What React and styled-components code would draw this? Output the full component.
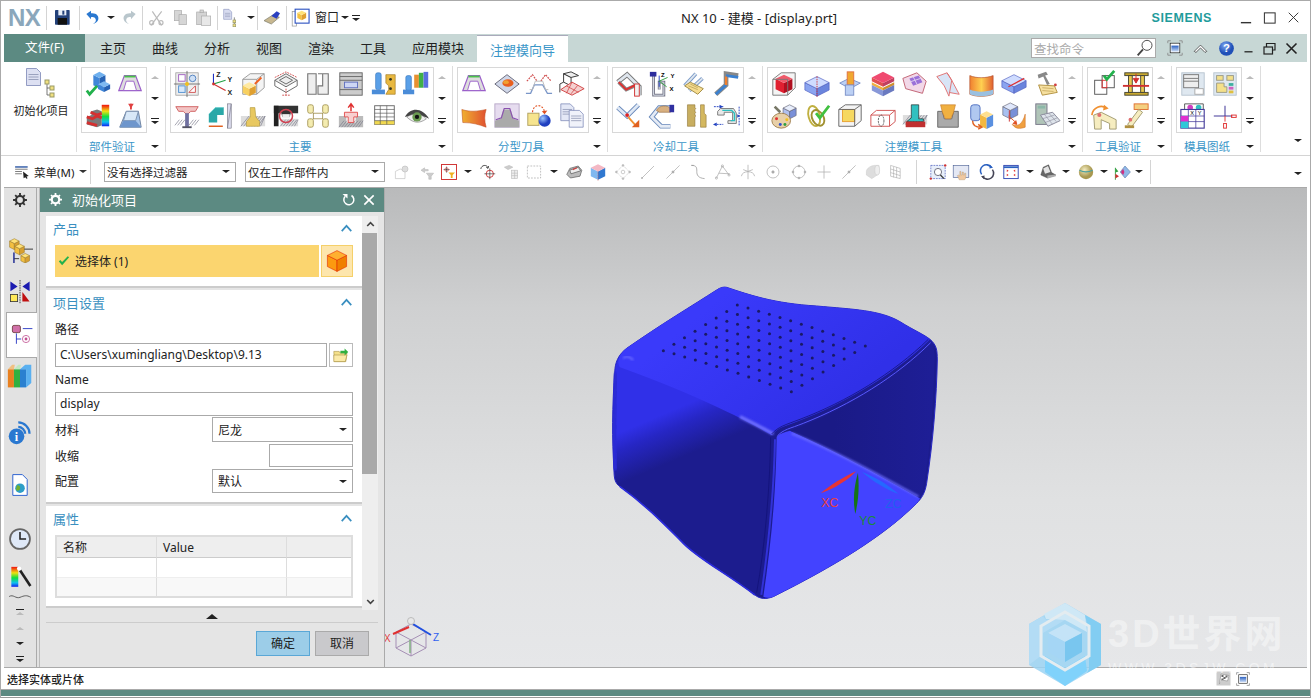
import React from 'react';
import styled, { createGlobalStyle } from 'styled-components';

const Global = createGlobalStyle`
  html, body { margin: 0; padding: 0; background: #fff; }
  * { box-sizing: border-box; }
  body { font-family: "Noto Sans", "Noto Sans CJK SC", sans-serif; color: #222; }
`;

const Frame = styled.div`
  position: relative; width: 1311px; height: 698px; overflow: hidden; background: #fff;
  border-top: 1px solid #aaa; border-left: 1px solid #aaa; border-right: 1px solid #aaa; border-bottom: 1px solid #999;
  display: flex; flex-direction: column;
`;
const TitleBar = styled.div`height: 33px; display: flex; align-items: center; flex-shrink: 0; padding-left: 7px; position: relative;`;
const Logo = styled.div`width: 33px; font: bold 24px/33px "Liberation Sans", sans-serif; color: #8ba7bb; letter-spacing: -0.5px;`;
const TitleItem = styled.div`width: ${p => p.$w}px; height: 24px; display: flex; align-items: center; justify-content: center; flex-shrink: 0;`;
const VSep = styled.div`width: 1px; height: ${p => p.$h || 24}px; background: #d4d4d4; flex-shrink: 0; margin: 0 ${p => p.$m || 0}px;`;
const WinLabel = styled.span`font-size: 12px; width: 24px; line-height: 24px; white-space: nowrap;`;
const AppTitle = styled.div`position: absolute; left: 680px; top: 0; font-size: 13px; line-height: 35px; white-space: nowrap; color: #222;`;
const Brand = styled.div`margin-left: auto; font: bold 12.5px/36px "Liberation Sans", sans-serif; letter-spacing: 0.6px; color: #1f9c9c; margin-right: 27px;`;
const WinBtns = styled.div`display: flex; align-items: center; gap: 10px; margin-right: 10px;`;

const TabBar = styled.div`height: 28px; margin: 0 3px; background: #c7d7d5; display: flex; align-items: stretch; flex-shrink: 0;`;
const FileTab = styled.div`width: 81px; background: #5c8a82; color: #fff; font-size: 12.5px; line-height: 28px; text-align: center; margin-right: 2px;`;
const Tab = styled.div`
  padding: 0 13px; font-size: 13px; line-height: 28px; white-space: nowrap;
  color: ${p => p.$active ? '#3a96c8' : '#222'}; background: ${p => p.$active ? '#fff' : 'transparent'};
  border-top: ${p => p.$active ? '1px solid #aab' : '0'}; margin-top: ${p => p.$active ? '1px' : '0'};
`;
const TabRight = styled.div`margin-left: auto; display: flex; align-items: center; margin-right: 5px;`;
const Search = styled.div`
  width: 125px; height: 20px; background: #fff; border: 1px solid #aaa; display: flex; align-items: center; justify-content: space-between;
  font-size: 12.5px; color: #aaa; padding: 0 0 0 2px; margin-right: 8px;
`;
const TabBtn = styled.div`width: ${p => p.$w || 24}px; height: 26px; display: flex; align-items: center; justify-content: center;`;

const Ribbon = styled.div`height: 93px; padding: 4px 0 0 3px; display: flex; flex-shrink: 0; position: relative;`;
const InitGroup = styled.div`width: 73px; height: 86px; border-right: 1px solid #ddd; display: flex; flex-direction: column; align-items: center; font-size: 11px; padding-left: 2px;`;
const InitIcon = styled.div`height: 32px; display: flex; align-items: flex-end;`;
const InitLabel = styled.div`margin-top: 6px; line-height: 14px; white-space: nowrap;`;
const Group = styled.div`height: 86px; padding: 1px 0 0 4px; border-right: 1px solid #ddd; flex-shrink: 0;`;
const GroupBody = styled.div`display: flex;`;
const IconGrid = styled.div`
  width: ${p => p.$cols * 33}px; height: 66px; border: 1px solid #d8d8d8; display: grid;
  grid-template-columns: repeat(${p => p.$cols}, 1fr); grid-template-rows: 1fr 1fr; align-items: center; justify-items: center;
`;
const ScrollCol = styled.div`width: 18px; height: 66px; display: flex; flex-direction: column; align-items: center; justify-content: space-around; padding: 0 3px 0 0;`;
const GroupFoot = styled.div`display: flex; margin-top: 7px; height: 13px; align-items: center;`;
const GroupLabel = styled.div`width: ${p => p.$cols * 33}px; text-align: center; font-size: 11.5px; line-height: 13px; color: #3a96c8; padding-right: 4px;`;
const FootArrow = styled.div`width: 18px; display: flex; justify-content: center; padding-right: 3px;`;
const RibbonEnd = styled.div`position: absolute; right: 8px; bottom: 8px;`;

const Tri = styled.span`
  display: inline-block; width: 0; height: 0; border-left: ${p => p.$s || 4}px solid transparent; border-right: ${p => p.$s || 4}px solid transparent;
  ${p => p.$up ? `border-bottom: ${(p.$s || 4) - 1}px solid ${p.$c || '#222'};` : `border-top: ${(p.$s || 4) - 1}px solid ${p.$c || '#222'};`}
`;
const Over = styled.span`
  display: inline-flex; flex-direction: column; align-items: center; gap: 2px;
  &::before { content: ''; width: 8px; height: 1px; background: #222; }
`;

const ToolBar = styled.div`height: 32px; border-top: 1px solid #d4d4d4; display: flex; align-items: center; flex-shrink: 0; padding-left: 13px; position: relative;`;
const MenuBtn = styled.div`display: flex; align-items: center; gap: 3px; font-size: 11.5px; width: 76px; flex-shrink: 0;`;
const Sel = styled.div`
  width: ${p => p.$w}px; height: ${p => p.$h || 20}px; border: 1px solid #aaa; background: #fff; display: flex; align-items: center; justify-content: space-between;
  padding: 0 5px 0 2px; font-size: ${p => p.$fs || 11.5}px; margin-left: ${p => p.$ml || 0}px; flex-shrink: 0; white-space: nowrap;
`;
const ToolItem = styled.div`width: ${p => p.$w}px; height: 24px; display: flex; align-items: center; justify-content: center; flex-shrink: 0;`;
const ToolEnd = styled.div`position: absolute; right: 8px; bottom: 7px;`;

const Main = styled.div`
  height: 481px; border-top: 1px solid #aaa; border-bottom: 1px solid #aaa; display: flex; flex-shrink: 0; margin: 0 3px; 
`;
const Rail = styled.div`width: 33px; height: 100%; background: #e2e2e2; border-right: 1px solid #aaa; display: flex; flex-direction: column; align-items: center; flex-shrink: 0;`;
const RailItem = styled.div`
  width: ${p => p.$active ? '31px' : '100%'}; height: ${p => p.$h}px; margin-top: ${p => p.$mt || 0}px; display: flex; align-items: center; justify-content: center; flex-shrink: 0;
  ${p => p.$active ? 'align-self: flex-end; margin-right: -1px; background: #fff; border: 1px solid #aaa; border-right: 0;' : ''}
`;
const RailGap = styled.div`width: 3px; background: #e2e2e2; border-right: 1px solid #bbb; flex-shrink: 0;`;
const Dialog = styled.div`width: 345px; background: #e5e5e5; border-right: 1px solid #aaa; display: flex; flex-direction: column; flex-shrink: 0;`;
const DialogHead = styled.div`height: 24px; background: #5c8a82; color: #fff; display: flex; align-items: center; font-size: 13px; line-height: 22px; padding: 0 8px 1px; gap: 9px;`;
const HeadRight = styled.div`margin-left: auto; display: flex; gap: 6px; align-items: center;`;
const DialogScroll = styled.div`display: flex; padding: 4px 6px 0; height: 398px;`;
const Panel = styled.div`width: 317px; display: flex; flex-direction: column; gap: 2px;`;
const Section = styled.div`background: #fff; padding: 0 9px; border-bottom: 2px solid #ccc; height: ${p => p.$h}px;`;
const SecHead = styled.div`height: 25px; margin: 0 0 1px -2px; display: flex; align-items: center; justify-content: space-between; color: #3a8fc0; font-size: 13px;`;
const Picked = styled.div`display: flex; gap: 2px; margin-top: 4px;`;
const PickMain = styled.div`width: 264px; height: 32px; background: #fbd56f; display: flex; align-items: center; gap: 4px; padding-left: 2px; font-size: 12px;`;
const PickBtn = styled.div`width: 32px; height: 32px; background: #fde6ad; border: 1px solid #f5d06a; display: flex; align-items: center; justify-content: center;`;
const LabelRow = styled.div`height: ${p => p.$h}px; display: flex; align-items: center; font-size: 12px; line-height: 14px;`;
const Field = styled.div`
  width: ${p => p.$w}px; height: ${p => p.$h || 24}px; border: 1px solid #aaa; background: #fff; font-size: 12px; line-height: 22px; padding-left: 4px; white-space: nowrap; flex-shrink: 0;
`;
const FieldRow = styled.div`display: flex; justify-content: space-between; align-items: flex-start;`;
const IconBtn = styled.div`width: 24px; height: 24px; border: 1px solid #bbb; display: flex; align-items: center; justify-content: center;`;
const Row = styled.div`height: ${p => p.$h}px; margin-top: ${p => p.$mt || 0}px; display: flex; align-items: center; justify-content: space-between; font-size: 12px; width: 298px;`;
const Table = styled.div`width: 298px; height: 63px; border: 2px solid #ddd; margin-top: 4px; font-size: 12px; display: grid; grid-template-columns: 100px 130px 1fr; grid-template-rows: 21px 20px 1fr;`;
const Cell = styled.div`
  padding-left: 6px; line-height: 21px; border-right: ${p => p.$end ? '0' : '1px solid #ddd'};
  background: ${p => p.$head ? '#eee' : p.$alt ? '#f8f8f8' : '#fff'};
  border-bottom: ${p => p.$last ? '0' : p.$head ? '1px solid #ccc' : '1px solid #eee'};
`;
const SBar = styled.div`width: 16px; margin-left: 0; background: #eee; height: 394px; display: flex; flex-direction: column; align-items: center;`;
const SBtn = styled.div`height: 17px; display: flex; align-items: center; justify-content: center; flex-shrink: 0; margin-top: ${p => p.$end ? 'auto' : '0'};`;
const SThumb = styled.div`width: 15px; height: 241px; background: #a9a9a9; align-self: flex-start; flex-shrink: 0;`;
const Collapse = styled.div`height: 13px; margin: 0 6px; border-bottom: 1px solid #ccc; display: flex; align-items: center; justify-content: center; padding-right: 1px; flex-shrink: 0;`;
const Buttons = styled.div`display: flex; justify-content: flex-end; gap: 5px; padding: 8px 15px 0 0;`;
const Btn = styled.div`
  width: 54px; height: 25px; text-align: center; font-size: 12px; line-height: 23px; border: 1px solid ${p => p.$primary ? '#5aa7d6' : '#aaa'}; background: ${p => p.$primary ? '#9ccde8' : '#c9c9cc'};
`;
const Viewport = styled.div`flex: 1; background: linear-gradient(#b9babb 0%, #cfd0d1 25%, #e0e1e2 65%, #e6e7e9 100%);`;
const Stage = styled.svg`display: block; width: 922px; height: 479px;`;
const StatusBar = styled.div`
  height: 21px; margin: 0 0 0 0; padding: 0 59px 0 6px; display: flex; align-items: center; font-size: 11px; font-weight: 500; color: #222; background: #fff; flex-shrink: 0; gap: 4px; position: relative;
`;
const StatusText = styled.div`margin-right: auto;`;
const Strip = styled.div`height: 6px; border-top: 1px solid #aaa; background: #5c8a82; box-sizing: content-box; flex-shrink: 0;`;
const Watermark = styled.div`position: absolute; left: 1027px; top: 601px; display: flex; gap: 6px; pointer-events: none;`;
const MarkText = styled.div`display: flex; flex-direction: column; padding-top: 9px;`;
const MarkTitle = styled.div`font: bold 38px/46px "Liberation Sans", "Noto Sans CJK SC", sans-serif; color: rgba(255,255,255,.42); white-space: nowrap; letter-spacing: 3px;`;
const MarkSub = styled.div`font: 14px/16px "Liberation Sans", sans-serif; color: rgba(255,255,255,.5); letter-spacing: 3.4px; margin-top: 3px; white-space: nowrap;`;
const Defs = styled.svg`position: absolute; width: 0; height: 0;`;

const Cube = ({ x, y, w = 12, h, t = '#ffd24d', l = '#f0a830', r = '#d88a20', s = 'none' }) => {
  const d = w / 4; const H = h ?? w / 2; const m = x + w / 2;
  return <g stroke={s} strokeWidth=".7">
    <polygon points={`${x},${y + d} ${m},${y + 2 * d} ${m},${y + 2 * d + H} ${x},${y + d + H}`} fill={l} />
    <polygon points={`${x + w},${y + d} ${m},${y + 2 * d} ${m},${y + 2 * d + H} ${x + w},${y + d + H}`} fill={r} />
    <polygon points={`${x},${y + d} ${m},${y} ${x + w},${y + d} ${m},${y + 2 * d}`} fill={t} />
  </g>;
};
const Chk = ({ x = 0, y = 0, w = 2.6 }) => <path transform={`translate(${x} ${y})`} d="M0 5l3 4 8-9" fill="none" stroke="#22b14c" strokeWidth={w} />;
const Hatch = ({ x, y, w, h }) => <g stroke="#778" strokeWidth=".7">{Array.from({ length: Math.floor(w / 3) }, (_, i) => <line key={i} x1={x + i * 3} y1={y + h} x2={x + i * 3 + h * .8 > x + w ? x + w : x + i * 3 + h * .8} y2={y} />)}</g>;
const Doc = ({ x, y, w = 12, h = 15, f = '#e4e8f6', s = '#7b86b5' }) => <g><path d={`M${x} ${y}h${w - 4}l4 4v${h - 4}h-${w}z`} fill={f} stroke={s} strokeWidth=".8" /><path d={`M${x + 2} ${y + 6}h${w - 4}M${x + 2} ${y + 8.5}h${w - 4}M${x + 2} ${y + 11}h${w - 4}`} stroke="#8a92b0" strokeWidth=".8" /></g>;
const Pipe = ({ d, c = '#889', i = '#dfe6ee', w = 4 }) => <g fill="none"><path d={d} stroke={c} strokeWidth={w} /><path d={d} stroke={i} strokeWidth={w - 2} /></g>;

const G = {
  partCheck: <g><Cube x={10} y={2} w={13} h={11} t="#6fb0ee" l="#3f86d8" r="#2763b5" /><Cube x={15} y={12} w={13} h={5} t="#7fbaf2" l="#3f86d8" r="#2763b5" /><Chk x={3} y={17} w={3} /></g>,
  trapPurple: <g><path d="M9 6h12l6 16H3z" fill="#ddd" stroke="#9a5fc9" strokeWidth="1.3" /><path d="M11 12h8l3 10H8z" fill="#fff" stroke="#9a5fc9" /><path d="M9 7h12" stroke="#4bc04b" strokeWidth="2" /></g>,
  stairRain: <g><rect x="19" y="3" width="8" height="23" fill="url(#rainbow)" /><path d="M3 16l5-2v-4l6-2 5 2v15l-5 2-11-3z" fill="#7a7a7a" /><path d="M3 16l6 2 5-3 5 2M7 11l7 3 5-2M3 22l11 3" stroke="#d43030" strokeWidth="3" fill="none" /></g>,
  machine: <g><path d="M11 10h13l3 17H4z" fill="#a8c6ea" stroke="#6a7f9d" /><path d="M11 10h13l-3 10H8z" fill="#d8e8f8" stroke="#7a8fad" /><path d="M4 27l4-7h13l6 7z" fill="#6e96cc" /><path d="M16 2v6" stroke="#e04040" strokeWidth="2" /><path d="M13 2h6l-3 5z" fill="#e04040" /></g>,
  layout: <g><rect x="3" y="3" width="24" height="24" fill="#eee" stroke="#999" strokeWidth=".8" /><rect x="6" y="5" width="7" height="7" fill="#fff" stroke="#a060c0" /><circle cx="21" cy="9" r="3.5" fill="#cfe0f5" stroke="#5080c0" /><rect x="6" y="17" width="7" height="7" fill="#d8e8fa" stroke="#5090d0" /><path d="M17 24l7-7v7z" fill="#fff" stroke="#d05050" /><path d="M15 1v28M1 15h28" stroke="#555" strokeWidth=".8" /><circle cx="15" cy="15" r="2.2" fill="#f0c020" /></g>,
  wcs: <g fontSize="7.5" fontWeight="700" fontFamily="Liberation Sans" fill="#222"><path d="M8 15V4" stroke="#2030c0" strokeWidth="1.2" /><path d="M8 15l13-4" stroke="#20a040" strokeWidth="1.2" /><path d="M8 15l13 7" stroke="#d03030" strokeWidth="1.2" /><circle cx="8" cy="15" r="1.5" fill="#d03030" /><text x="11" y="8">Z</text><text x="23" y="13">Y</text><text x="23" y="27">X</text></g>,
  wireYel: <g><path d="M4 10l8-6h15v15l-8 7H4z" fill="#f4f4f4" stroke="#999" /><path d="M4 10h15v16M19 10l8-6" fill="none" stroke="#999" /><Cube x={4} y={13} w={14} h={8} t="#ffe9a0" l="#f7d060" r="#e0a030" /><path d="M17 15l7-7" stroke="#f06020" strokeWidth="2" /></g>,
  moldDot: <g fill="none"><path d="M3 11l12-7 12 7-12 7z" fill="#eee" stroke="#666" /><path d="M8 11l7-4 7 4-7 4z" stroke="#666" /><path d="M3 11v6l12 7 12-7v-6" stroke="#666" /><path d="M3 8l12-6 12 6M15 20v7M11 27h8" stroke="#d05050" strokeDasharray="2 1" /></g>,
  notch: <g fill="#eee" stroke="#777" strokeWidth="1.2"><path d="M4 4h9v22H4z" /><path d="M15 4h11v22h-11v-9h5V4" /></g>,
  moldFrame: <g><rect x="3" y="3" width="24" height="24" fill="#ccc" stroke="#666" /><path d="M3 7h24M3 11h24M3 21h24" stroke="#666" /><rect x="8" y="13" width="14" height="6" fill="#cdd6f4" stroke="#6070c0" /></g>,
  boltPlate: <g><rect x="6" y="3" width="6" height="18" rx="2" fill="#5aa0e8" stroke="#3070b8" strokeWidth=".6" /><path d="M2 21h14v5H2z" fill="#4a8cd8" /><path d="M17 5h10v21H17l3-5v-4l-3-3v-4z" fill="#e8b840" stroke="#a07820" strokeWidth=".7" /><circle cx="22" cy="10" r="1.5" fill="#332" /><circle cx="22" cy="20" r="1.5" fill="#332" /></g>,
  boltBooks: <g><rect x="3" y="6" width="6" height="16" rx="2" fill="#5aa0e8" stroke="#3070b8" strokeWidth=".6" /><path d="M0 21h12v5H0z" fill="#4a8cd8" /><rect x="12" y="5" width="5" height="14" fill="#e89030" /><rect x="17" y="3" width="5" height="16" fill="#40b048" /><rect x="22" y="2" width="5" height="17" fill="#5a70e0" /></g>,
  ejector: <g><Hatch x={2} y={19} w={11} h={6} /><Hatch x={17} y={19} w={11} h={6} /><path d="M3 5h24l-3 5h-5l-3 3H14l-3-3H6z" fill="#f2c4c4" stroke="#d06060" /><rect x="13" y="12" width="4" height="15" fill="#7070a0" /><path d="M10 27h10" stroke="#556" strokeWidth="2" /></g>,
  slider: <g><path d="M3 22V13l7-7h9v8h-7v8z" fill="#2aa8a8" /><path d="M3 13l7-7h9" stroke="#70d0d0" fill="none" /><path d="M3 26h15" stroke="#e06020" strokeWidth="1.6" /><rect x="23" y="2" width="4" height="26" fill="#dde" stroke="#667" strokeWidth=".6" /><Hatch x={23} y={2} w={4} h={26} /></g>,
  hatchYel: <g><rect x="2" y="15" width="26" height="11" fill="#ddd" /><Hatch x={2} y={15} w={26} h={11} /><path d="M12 6h5l1 10 4 5v5H8v-5l4-5z" fill="#e8c860" stroke="#a89030" strokeWidth=".6" /></g>,
  moldRed: <g><path d="M2 4h26v8H20l-1 4h-8l-1-4H2z" fill="#333" /><path d="M2 4h5v22H2z" fill="#222" /><path d="M9 18h19v8H9z" fill="#ddd" /><Hatch x={9} y={19} w={19} h={7} /><circle cx="15" cy="15" r="7" fill="none" stroke="#d04050" strokeWidth="1.6" /><rect x="11" y="13" width="8" height="4" fill="#eee" /></g>,
  yelH: <g fill="#f4ecb0" stroke="#a09050" strokeWidth=".9"><rect x="4" y="3" width="6" height="9" rx="2" /><rect x="20" y="3" width="6" height="9" rx="2" /><rect x="4" y="18" width="6" height="9" rx="2" /><rect x="20" y="18" width="6" height="9" rx="2" /><rect x="10" y="12" width="10" height="6" fill="#fff" /></g>,
  redUp: <g><path d="M2 15h8v7h10v-7h8v12H2z" fill="#bbb" /><Hatch x={2} y={20} w={26} h={7} /><path d="M8 11h14v5h-4v6h-6v-6H8z" fill="#f8d0d0" stroke="#e05050" /><path d="M15 10V3M12 6l3-4 3 4" stroke="#e03030" strokeWidth="1.6" fill="none" /></g>,
  table: <g><rect x="5" y="4" width="21" height="20" fill="#fff" stroke="#666" /><rect x="5" y="20" width="21" height="4" fill="#f0d850" /><path d="M5 8h21M5 12h21M5 16h21M5 20h21M11 4v20M18 4v20" stroke="#555" strokeWidth=".7" /></g>,
  eye: <g><path d="M2 16C8 6 20 5 28 18 21 14 12 13 2 16z" fill="#444" /><path d="M4 16c8-5 15-4 21 2-8 6-15 4-21-2z" fill="#eee" stroke="#666" strokeWidth=".6" /><circle cx="15" cy="16" r="5" fill="#6a9a50" /><circle cx="15" cy="16" r="2.3" fill="#111" /></g>,
  diamond: <g><path d="M2 15L15 5l13 10-13 10z" fill="#cfd6e8" stroke="#667" /><ellipse cx="16" cy="14" rx="6" ry="4" fill="#e86020" /><ellipse cx="14" cy="13" rx="3" ry="2" fill="#f0a030" /></g>,
  wave: <g fill="none"><path d="M2 12l6-7 5 7M17 12l5-7 6 7" stroke="#d05050" strokeDasharray="2 1" strokeWidth="1.3" /><path d="M1 25h5l4-9h9l5 9h5" stroke="#7a96c8" strokeWidth="1.4" /><path d="M5 21h3l3-9h8l3 9h3" stroke="#bbb" /></g>,
  redGrid: <g><path d="M6 4l8 4v9l-8-4z" fill="#fff" stroke="#333" /><path d="M6 4l8-2 8 4-8 2z" fill="#eee" stroke="#333" /><path d="M2 15v9M6 13l-4 2" stroke="#333" /><path d="M3 21l12-8 13 7-13 7z" fill="#f4d0d0" stroke="#d04040" /><path d="M9 17l13 7M15 13l-6 12M21 16.500l-7 9" stroke="#d04040" strokeWidth=".8" /></g>,
  orange: <path d="M2 8c9 3 17 2 26 0-2 6-2 12 0 19-8-3-15-5-25-5z" fill="url(#orangeG)" stroke="#c05020" strokeWidth=".6" />,
  grayPurple: <g><rect x="2" y="2" width="26" height="25" fill="#e6dcef" stroke="#b8a8c8" /><path d="M2 27v-7l6-2 3-10h8l3 10 6 2v7z" fill="#aaa" /><path d="M3 19l6-2 3-10h6l3 10 6 2" stroke="#8a50b0" fill="none" strokeWidth="1.2" /></g>,
  squareBall: <g><rect x="3" y="12" width="12" height="13" fill="#f6e48e" stroke="#b0a060" /><circle cx="21" cy="20" r="6.500" fill="url(#ball)" /><path d="M8 11C9 2 19 1 21 11" fill="none" stroke="#e05020" strokeDasharray="2 1.500" strokeWidth="1.2" /><path d="M18 10l3 3 3-4z" fill="#e05020" /></g>,
  docs: <g><Doc x={3} y={2} w={14} h={18} /><Doc x={12} y={9} w={15} h={18} f="#f0f2fa" /></g>,
  pipeRed: <g><Pipe d="M3 13L13 5l13 13v9" w={5} c="#777" /><path d="M4 13l8 8 9-4" fill="none" stroke="#888" strokeWidth="4" /><path d="M4 13l8 8 10-5" fill="none" stroke="#e03030" strokeWidth="2" /><rect x="21" y="15" width="5" height="13" fill="#f2f2f2" stroke="#d03030" /></g>,
  pipeAxes: <g><Pipe d="M6 6v21h11V13h-5v8" w={3} c="#778" /><path d="M12 6v12" stroke="#2040c0" /><path d="M12 12l9-4M12 12l8 6" stroke="#30a040" /><rect x="2" y="2" width="7" height="5" fill="#2d2d9d" /><g fontSize="6.5" fontWeight="700" fontFamily="Liberation Sans"><text x="14" y="7">Z</text><text x="24" y="9">Y</text><text x="23" y="23">X</text></g></g>,
  pipeTag: <g><Pipe d="M5 17L17 4" w={4} c="#7a9ac8" /><Pipe d="M10 22L24 9" w={4} c="#7a9ac8" /><path d="M5 17l14 9 6-6-14-7z" fill="#f6dc90" stroke="#a08a40" /><path d="M9 17l10 4M11 15l8 4" stroke="#a08a40" strokeWidth=".6" /></g>,
  pipeBlue: <g><path d="M3 26L14 16V4l13 2" fill="none" stroke="#888" strokeWidth="5" /><path d="M3 26L14 16" stroke="#3a80d0" strokeWidth="3" /><path d="M14 6l13 2" stroke="#3a80d0" strokeWidth="3" /><path d="M14 16V7" stroke="#f08030" strokeWidth="2.500" /></g>,
  vPipe: <g><Pipe d="M3 6L13 15 25 3" w={5} c="#6a8abb" i="#dfe8f5" /><circle cx="13" cy="14" r="2" fill="#e02020" /><path d="M14 16l9 10" stroke="#f09030" strokeWidth="2" /><path d="M18 27h8v-8z" fill="#e06020" /></g>,
  handC: <g><Pipe d="M24 6H12L4 16l10 10h10" w={5} c="#6a8abb" i="#e5ebf5" /><path d="M9 9c3-6 12-6 15-2v4H12z" fill="#d8b080" stroke="#8a6030" strokeWidth=".6" /><rect x="23" y="3" width="5" height="8" fill="#3030a0" /></g>,
  brass: <g><path d="M8 3h8v3l1 1-1 1v2l1 1-1 1v2l1 1-1 1v10H8z" fill="#c8ae60" stroke="#8a7030" strokeWidth=".6" /><path d="M22 3h4v9l2 2v13h-6V14l0-2z" fill="#d4b860" stroke="#8a7030" strokeWidth=".6" /></g>,
  channel: <g><path d="M8 7h14l3 5v11h-9v-3h5v-9h-9v3H5v-4z" fill="#e8e8e8" stroke="#777" /><path d="M10 9h10l3 3v8h-4" stroke="#2ac0c0" strokeWidth="1.5" fill="none" /><path d="M1 5h10M1 24h10M28 5v20" stroke="#2040c0" strokeDasharray="2 1" /><path d="M7 3l4 2-4 2zM4 22l-4 2 4 2zM26 13l3 2-3 2z" fill="#2040c0" /></g>,
  redCube: <g><path d="M3 10l9-7h15v16l-8 8H3z" fill="#f4f4f4" stroke="#777" /><Cube x={6} y={5} w={18} h={11} t="#f05a6a" l="#e02030" r="#b01020" /><path d="M3 10h16v17" fill="none" stroke="#777" /></g>,
  blueBox: <g><Cube x={2} y={7} w={26} h={8} t="#cfdcff" l="#8aa4f0" r="#6a84dd" s="#5060c0" /><path d="M15 7v22" stroke="#d03030" strokeDasharray="1.5 1" strokeWidth="1" /></g>,
  blocks: <g><path d="M4 14l10-5 12 5-11 6z" fill="#bcd0f4" stroke="#7a90c8" /><rect x="12" y="2" width="7" height="14" fill="#f0a830" stroke="#e07040" /><rect x="10" y="16" width="9" height="11" fill="#bcd0f4" stroke="#7a90c8" /></g>,
  layered: <g><Cube x={3} y={2} w={24} h={4} t="#f04a70" l="#e05050" r="#c04060" /><path d="M3 13l12 6v3L3 16z" fill="#f0b040" /><path d="M27 13l-12 6v3l12-6z" fill="#d09030" /><path d="M3 16l12 6v6L3 22z" fill="#8898d8" /><path d="M27 16l-12 6v6l12-6z" fill="#6a7ac0" /></g>,
  tile: <g><path d="M2 9l15-6 10 9-4 13-18-5z" fill="#f2d8e8" stroke="#c06070" /><path d="M9 9l10-3 4 7-10 4z" fill="#9a70d8" /><path d="M13 7l4 8M9 13l12-4" stroke="#e0d0f0" /></g>,
  sheet: <path d="M3 7l11-4 5 8-3 17-5-11zM14 3l5 8 8 15-11-2" fill="#d8e4f6" stroke="#e07070" strokeWidth="1" />,
  curved: <g><path d="M3 6c7 3 17 3 25 0v20c-8 3-18 3-25 0z" fill="url(#curveG)" stroke="#b05030" strokeWidth=".7" /><path d="M3 21c7 3 17 3 25 0v5c-8 3-18 3-25 0z" fill="#9ac0e0" /></g>,
  boxLine: <g><Cube x={2} y={5} w={26} h={7} t="#cfdcff" l="#8aa4f0" r="#6a84dd" s="#5060c0" /><path d="M9 18L26 9" stroke="#e03030" strokeWidth="1.300" /></g>,
  hammerTag: <g><path d="M5 5l9-3 2 3-3 1 5 9-3 1-4-9-5 2z" fill="#888" /><path d="M6 16l17 1 3 7-16 3z" fill="#f6e0a0" stroke="#b09040" /><path d="M10 19l12 1M10 22l12 1" stroke="#b09040" strokeWidth=".6" /><circle cx="24" cy="16" r="1.500" fill="#d04040" /></g>,
  palette: <g><Cube x={14} y={3} w={14} h={8} t="#e8eefc" l="#b0c0f0" r="#7a90d8" s="#667" /><path d="M6 4l6 6-2 2-6-6z" fill="#776" /><ellipse cx="12" cy="20" rx="10" ry="8" fill="#e8d0a8" stroke="#a08050" /><circle cx="7" cy="18" r="1.600" fill="#e03030" /><circle cx="11" cy="24" r="1.600" fill="#3050d0" /><circle cx="16" cy="24" r="1.600" fill="#30a040" /><circle cx="18" cy="19" r="1.600" fill="#f0c020" /></g>,
  knot: <g fill="none"><ellipse cx="12" cy="15" rx="6" ry="11" stroke="#c0b040" strokeWidth="2" transform="rotate(-15 12 15)" /><ellipse cx="16" cy="17" rx="6" ry="9" stroke="#a09030" strokeWidth="2" transform="rotate(-30 16 17)" /><path d="M14 12l4 5 10-13" stroke="#40c040" strokeWidth="3" /></g>,
  wireCube: <g><path d="M3 8l7-5h17v17l-7 6H3z" fill="#f4f4f4" stroke="#666" /><rect x="7" y="8" width="13" height="13" fill="#f6d860" stroke="#e8a030" /><path d="M3 8h17v18M20 8l7-5" fill="none" stroke="#666" /></g>,
  redBox: <g fill="#fff" stroke="#d05050"><path d="M2 14l6-5h20v12l-6 5H2z" /><path d="M2 14h20v12M22 14l6-5" fill="none" /><ellipse cx="13" cy="20" rx="3" ry="6" fill="none" stroke="#555" strokeDasharray="2 1" /></g>,
  hatchTeal: <g><rect x="2" y="14" width="26" height="10" fill="#ddd" /><Hatch x={2} y={14} w={26} h={10} /><path d="M11 3h8v15h5v3H6l5-4z" fill="#30c0c0" stroke="#222" strokeWidth=".7" /><rect x="5" y="21" width="21" height="6" fill="#c03030" /></g>,
  tray: <g><path d="M4 10h5l2 8h8l2-8h5v17H4z" fill="#aaa" stroke="#666" /><path d="M7 3h16l-2 8-3 7h-6l-3-7z" fill="#f0b040" stroke="#c07020" strokeWidth=".6" /></g>,
  cylBox: <g><rect x="4" y="3" width="10" height="17" rx="3" fill="#b0c8f0" stroke="#5070c0" /><Cube x={14} y={10} w={14} h={12} t="#ffe090" l="#f4b840" r="#5a90e0" /><path d="M6 20c0 5 4 7 9 7M12 24l4 3-4 2" stroke="#e06020" fill="none" strokeWidth="1.500" /></g>,
  cubeCurve: <g><Cube x={3} y={1} w={16} h={9} t="#e0e8fc" l="#a8c0f0" r="#7890d8" s="#667" /><path d="M10 9v12" stroke="#d03030" /><path d="M13 24c6 3 11 0 14-11v14c-6 2-10 2-14-3z" fill="#f0a040" stroke="#d07020" strokeWidth=".6" /><path d="M9 15l7 6M14 23l3-3 1 4z" stroke="#e05020" fill="#e05020" /></g>,
  calc: <g><rect x="3" y="2" width="12" height="22" fill="#b0c4b8" stroke="#778" /><rect x="5" y="4" width="8" height="3" fill="#8cb8a8" /><path d="M8 14l13-3 8 9-13 6z" fill="#dde3ea" stroke="#889" /><path d="M12 13l9 11M17 12l8 9M10 18l13-4M13 22l13-5" stroke="#889" strokeWidth=".6" /></g>,
  boxesCheck: <g fill="#fff" stroke="#555"><rect x="5" y="11" width="13" height="15" /><rect x="13" y="6" width="13" height="13" /><rect x="13" y="11" width="5" height="8" stroke="#e03030" fill="none" /><Chk x={15} y={1} w={3} /></g>,
  goldFrame: <g><rect x="3" y="3" width="25" height="3" fill="#c8a830" stroke="#443" /><rect x="3" y="24" width="25" height="3" fill="#c8a830" stroke="#443" /><rect x="7" y="6" width="4" height="18" fill="#e8c850" stroke="#443" /><rect x="20" y="6" width="4" height="18" fill="#e8c850" stroke="#443" /><path d="M1 17h28" stroke="#d03030" strokeWidth="2" /><path d="M15 4v10M12 9l3 5 3-5z" stroke="#d03030" fill="#d03030" /></g>,
  armUp: <g><path d="M4 14l8-3 16 8v10h-7v-6l-9-4v10H5z" fill="#f6edc0" stroke="#a09a70" /><circle cx="10" cy="14" r="2.200" fill="#e07070" /><path d="M2 14C3 6 12 2 18 7" fill="none" stroke="#f09030" strokeWidth="1.800" /><path d="M15 3l5 4-6 2z" fill="#f09030" /></g>,
  armTilt: <g><rect x="13" y="2" width="15" height="6" fill="#f4d080" stroke="#e07030" /><path d="M6 24L18 8l4 3L10 27z" fill="#f6edc0" stroke="#a09a70" /><rect x="3" y="25" width="10" height="3" fill="#b09040" /><circle cx="9" cy="19" r="2" fill="#e07070" /></g>,
  drawSheet: <g><rect x="3" y="3" width="24" height="24" fill="#dfe8f0" stroke="#b8c4d0" /><rect x="5" y="5" width="16" height="14" fill="#eee" stroke="#777" /><path d="M5 9h16M5 12h16" stroke="#777" /><rect x="17" y="20" width="9" height="6" fill="#fff" stroke="#aaa" /></g>,
  yelGrid: <g><rect x="3" y="3" width="24" height="24" fill="#dfe8f0" stroke="#b8c4d0" /><rect x="6" y="6" width="7" height="5" fill="#f4e08a" stroke="#998" /><rect x="17" y="6" width="7" height="5" fill="#f4e08a" stroke="#998" /><path d="M6 14h8v4h3v6H6z" fill="#f4e08a" stroke="#998" /><rect x="19" y="14" width="5" height="3" fill="#40b0a0" /><rect x="19" y="18" width="5" height="3" fill="#d060c0" /><rect x="19" y="22" width="5" height="3" fill="#e0c040" /></g>,
  purpleTable: <g><path d="M6 2h20v7H6z" fill="#fff" stroke="#555" /><circle cx="12" cy="6" r="3" fill="#d040c0" /><circle cx="21" cy="6" r="3" fill="#30c0c0" /><rect x="2" y="8" width="25" height="20" fill="#fff" stroke="#443b9a" strokeWidth="1.200" /><path d="M2 15h25M2 21h25M10 8v20M18 8v20" stroke="#443b9a" strokeWidth=".8" /><rect x="2" y="15" width="8" height="6" fill="#e030d0" /><rect x="2" y="21" width="8" height="7" fill="#30c8d8" /><text x="12" y="14" fontSize="6" fontFamily="Liberation Sans">X</text><text x="20" y="14" fontSize="6" fontFamily="Liberation Sans">Y</text></g>,
  cross: <g fill="none"><path d="M3 15h20M15 4v11" stroke="#443b9a" strokeWidth="1.100" /><path d="M15 15v6" stroke="#e03030" /><rect x="22" y="14" width="5" height="2.500" stroke="#e03030" /><rect x="13.500" y="23" width="3" height="5" stroke="#e03030" /></g>,
  initDoc: <g><Doc x={0.500} y={0.500} w={14} h={17} f="#dde0f2" /><path d="M21 14v13M21 20h3M21 27h3" stroke="#555" strokeWidth=".8" /><rect x="19" y="12" width="4" height="4" fill="#f0e080" stroke="#996" /><rect x="24" y="18" width="4" height="4" fill="#f0e080" stroke="#996" /><rect x="24" y="25" width="4" height="4" fill="#f0e080" stroke="#996" /></g>,
  asm: <g><Cube x={3} y={2} w={11} h={7} t="#ffe278" l="#f4c040" r="#d8a030" s="#a08030" /><Cube x={9} y={8} w={11} h={7} t="#ffe278" l="#f4c040" r="#d8a030" s="#a08030" /><path d="M8 18v12M8 25h6M20 14h12" stroke="#222" strokeWidth="1" /><path d="M8 18v12" stroke="#2030c0" strokeWidth="1.200" /><Cube x={16} y={19} w={10} h={6} t="#ffe278" l="#f4c040" r="#d8a030" s="#a08030" /></g>,
  mirror: <g><path d="M3 2l9 6-9 6zM27 2l-9 6 9 6z" fill="#1b1bb0" /><path d="M15 0v30" stroke="#222" strokeDasharray="2 1" /><rect x="3" y="18" width="9" height="9" fill="#ffe95a" stroke="#333" /><path d="M18 27V15l9 12z" fill="#c01010" /></g>,
  moldTree: <g><rect x="3" y="3" width="10" height="9" rx="2" fill="#d070a8" stroke="#633" /><path d="M8 13v13M8 20h6M16 7h12" stroke="#2030c0" strokeWidth="1.100" /><circle cx="20" cy="20" r="4.500" fill="none" stroke="#c05090" /><circle cx="20" cy="20" r="1.800" fill="#c05090" /></g>,
  books: <g><rect x="1" y="6" width="7" height="21" fill="#e88020" /><path d="M1 6l5-5h3L8 6z" fill="#f0c080" /><rect x="8" y="6" width="7" height="21" fill="#30b040" /><path d="M8 6l5-5h3l-1 5z" fill="#c0e8c0" /><rect x="15" y="6" width="7" height="21" fill="#2a80d0" /><path d="M15 6l6-5h7l-6 5zM22 6l6-5v21l-6 5z" fill="#5ab0f0" /></g>,
  info: <g fill="none" stroke="#2a78d0" strokeWidth="2.600"><path d="M13 4c7 0 13 6 13 13" /><path d="M13 9c4 0 8 4 8 8" /><circle cx="11" cy="20" r="9" fill="#2a78d0" stroke="none" /><text x="9" y="25" fill="#fff" stroke="none" fontFamily="Liberation Serif" fontWeight="700" fontSize="14">i</text></g>,
  webDoc: <g><path d="M6 2h12l6 6v20H6z" fill="#fff" stroke="#2a60d0" strokeWidth="1.200" /><circle cx="15" cy="19" r="6" fill="#2d9ec8" /><path d="M11 16c3-2 5 2 4 4s-3 3-5 1z" fill="#70b030" /></g>,
  clock: <g><circle cx="15" cy="15" r="11.500" fill="#dfe9f8" stroke="#666" strokeWidth="2" /><path d="M15 7v8h7" stroke="#222" strokeWidth="1.800" fill="none" /></g>,
  rainbowWand: <g><rect x="5" y="1" width="8" height="23" fill="url(#rainbow)" /><path d="M15 5l12 18" stroke="#222" strokeWidth="3" /><circle cx="14" cy="3" r="2.500" fill="#fff" /></g>,
  save: <g><rect x="3" y="3" width="22" height="22" rx="1" fill="#23417a" /><rect x="8" y="3" width="12" height="8" fill="#e8eef8" /><rect x="7" y="15" width="14" height="10" fill="#111" /><rect x="14" y="4" width="3" height="6" fill="#23417a" /></g>,
  undo: <path d="M5 9l7-5v4c8-1 12 4 11 9-1 4-4 6-8 7 4-2 5-5 4-7-1-3-4-4-7-3v3z" fill="#2a78d0" />,
  redo: <path d="M25 9l-7-5v4c-8-1-12 4-11 9 1 4 4 6 8 7-4-2-5-5-4-7 1-3 4-4 7-3v3z" fill="#b9c6cc" />,
  cut: <g stroke="#bbb" fill="none" strokeWidth="1.800"><path d="M6 26L22 5M22 26L8 5" /><circle cx="7" cy="22" r="3" /><circle cx="21" cy="22" r="3" /></g>,
  copy: <g fill="#d6d6d6" stroke="#aaa"><rect x="5" y="4" width="11" height="15" /><rect x="12" y="10" width="11" height="15" /></g>,
  paste: <g fill="#d4d4d4" stroke="#aaa"><rect x="4" y="6" width="15" height="19" /><rect x="9" y="3" width="5" height="4" /><rect x="11" y="12" width="14" height="14" fill="#e8e8e8" /></g>,
  treeDoc: <g><Doc x={4} y={2} w={12} h={15} f="#d8dcf0" /><path d="M20 14v12" stroke="#555" /><rect x="18" y="18" width="4" height="4" fill="#f0e080" stroke="#996" /><rect x="18" y="24" width="4" height="4" fill="#f0e080" stroke="#996" /></g>,
  eraser: <g><path d="M3 19l14-9 9 4-12 10z" fill="#c8b890" stroke="#776" /><path d="M14 12l8-7 5 3-5 8z" fill="#2a40c0" /></g>,
  window: <g><rect x="3" y="6" width="6" height="20" fill="#fff" stroke="#999" /><rect x="7" y="3" width="19" height="19" fill="#fff" stroke="#2a50c0" strokeWidth="1.500" /><Cube x={10} y={5} w={12} h={7} t="#ffe278" l="#f4c040" r="#e0a030" /></g>,
  menu: <g><path d="M2 7h22M2 11h22M2 15h12M2 19h12" stroke="#444" strokeWidth="1.200" /><path d="M2 7h22" stroke="#2a60c0" strokeWidth="2" /><path d="M16 15l10 8-4 1 2 3-2 1-2-3-3 2z" fill="#222" /></g>,
  gAsm: <g fill="none" stroke="#bbb"><path d="M4 14l8-4 8 4v12H4z" /><circle cx="20" cy="10" r="5" fill="#ddd" /></g>,
  gFilter: <g fill="#ccc" stroke="#bbb"><path d="M14 17h12l-4 5v5h-4v-5z" /><path d="M5 12l6-4v3h6v2h-6v3z" /></g>,
  filterBox: <g><rect x="2.500" y="2.500" width="25" height="25" fill="#fff" stroke="#d03030" strokeWidth="1.600" /><path d="M11 6v10M6 11h10" stroke="#222" /><circle cx="11" cy="11" r="3" fill="none" stroke="#d03030" /><path d="M14 16h11l-4 4v5h-3v-5z" fill="#f0b020" /></g>,
  target: <g fill="none"><circle cx="18" cy="18" r="6" stroke="#d03030" strokeWidth="1.500" /><path d="M18 9v18M9 18h18" stroke="#222" /><path d="M3 10C4 3 13 2 15 8M12 7l3 2 1-4" stroke="#222" strokeWidth="1.300" /></g>,
  gTree: <g fill="#ccc" stroke="#bbb"><path d="M4 7l8-3 6 3-8 4z" /><rect x="16" y="12" width="10" height="14" fill="#eee" /><path d="M16 17h10M16 21h10M21 12v14" /></g>,
  marquee: <g fill="none" stroke="#999"><rect x="4" y="5" width="22" height="20" strokeDasharray="3 2" /></g>,
  shaded: <g><path d="M3 19l5-10 14-4 6 7-3 10-16 3z" fill="#bbb" stroke="#444" /><path d="M8 12l14-5 4 6-16 5z" fill="#eee" stroke="#444" /><path d="M13 11l7-3" stroke="#d04040" strokeWidth="2" /></g>,
  blueCube: <g><Cube x={3} y={2} w={24} h={14} t="#f4b8c4" l="#80b8f0" r="#3078d0" /><path d="M15 14v16" stroke="#d06060" strokeDasharray="2 1" /></g>,
  gSnap: <g fill="none" stroke="#bbb" strokeWidth="1.200"><path d="M15 4l11 11-11 11L4 15z" strokeDasharray="2 1.500" /><circle cx="15" cy="15" r="3" /><circle cx="15" cy="4" r="1.500" fill="#bbb" /><circle cx="4" cy="15" r="1.500" fill="#bbb" /><circle cx="26" cy="15" r="1.500" fill="#bbb" /><circle cx="15" cy="26" r="1.500" fill="#bbb" /></g>,
  gLine: <g fill="none" stroke="#aaa" strokeWidth="1.200"><path d="M5 25L25 5" /><circle cx="5" cy="25" r="1" fill="#aaa" /></g>,
  gLineMid: <g fill="none" stroke="#aaa" strokeWidth="1.200"><path d="M4 26L26 4" /><circle cx="15" cy="15" r="1.800" fill="#aaa" /></g>,
  gCurve: <path d="M4 4c9 0 9 4 9 10s2 11 13 12M4 4h4" fill="none" stroke="#999" strokeWidth="1.300" />,
  gPoly: <g fill="none" stroke="#aaa" strokeWidth="1.200"><path d="M4 25L14 5l11 15" /><path d="M8 17l18 1" /><circle cx="14" cy="5" r="1.800" /><circle cx="4" cy="25" r="1.800" /><circle cx="25" cy="20" r="1.800" /></g>,
  gTan: <path d="M15 3v24M4 22C5 12 25 12 26 22M15 14l-8-3M15 14l8-3" fill="none" stroke="#aaa" strokeWidth="1.200" />,
  gCircDot: <g fill="none" stroke="#aaa" strokeWidth="1.200"><circle cx="15" cy="15" r="10" /><circle cx="15" cy="15" r="2" fill="#aaa" /></g>,
  gCirc4: <g fill="none" stroke="#aaa" strokeWidth="1.200"><circle cx="15" cy="15" r="10" /><circle cx="15" cy="5" r="1.500" fill="#bbb" /><circle cx="5" cy="15" r="1.500" fill="#bbb" /><circle cx="25" cy="15" r="1.500" fill="#bbb" /><circle cx="15" cy="25" r="1.500" fill="#bbb" /></g>,
  gPlus: <path d="M15 4v22M4 15h22" stroke="#aaa" strokeWidth="1.200" />,
  gCyl: <g fill="#ddd" stroke="#ccc"><path d="M4 14c0-5 8-10 14-10h7v14l-12 8-9-6z" /><ellipse cx="22" cy="12" rx="4" ry="8" fill="#eee" /></g>,
  gGrid: <g fill="none" stroke="#aaa"><path d="M6 4l16 5v17L6 22z" /><path d="M6 10l16 5M6 16l16 5M11 6v18M16 7v18" /></g>,
  zoomBox: <g><rect x="3" y="4" width="24" height="22" fill="#e8effa" stroke="#2a40b0" strokeDasharray="3 1.500" /><circle cx="15" cy="15" r="6" fill="#fff" stroke="#667" strokeWidth="1.500" /><path d="M19 20l6 6" stroke="#333" strokeWidth="2" /><circle cx="3" cy="26" r="2" fill="#d03030" /><circle cx="27" cy="4" r="2" fill="#d03030" /></g>,
  panHand: <g><rect x="2" y="4" width="26" height="20" fill="#e4e8f4" stroke="#445a90" /><path d="M12 28l-3-7 2-1 2 2v-8h2v6h2v-5h2v5h2v-3h2v8l-2 3z" fill="#f0c8a0" stroke="#a08050" strokeWidth=".5" /></g>,
  rotate: <g fill="none" strokeWidth="2.600"><path d="M6 19A10 10 0 0 1 22 7" stroke="#2a60c0" /><path d="M24 11A10 10 0 0 1 8 23" stroke="#445" /><path d="M20 3l5 5-6 1z" fill="#2a60c0" stroke="none" /><path d="M10 27l-5-5 6-1z" fill="#445" stroke="none" /></g>,
  fit: <g><rect x="3" y="4" width="24" height="22" fill="#fff" stroke="#2a40b0" strokeWidth="1.500" /><path d="M3 7h24" stroke="#2a60c0" strokeWidth="3" /><path d="M8 11l3 2-3 2zM22 11l-3 2 3 2zM8 22l3-2-3-2zM22 22l-3-2 3-2z" fill="#e03030" /></g>,
  render: <g><path d="M3 20l4-13 9-4 5 13 7 4-14 5z" fill="#666" stroke="#333" strokeWidth=".6" /><path d="M7 9l8-4 4 10-9 3z" fill="#e4e4e4" /><path d="M14 21l14-2v3l-14 4z" fill="#aaa" /></g>,
  sphere: <g><circle cx="15" cy="15" r="12" fill="url(#gold)" /><path d="M4 12c8 4 14 4 22 0" stroke="#48a0a0" strokeWidth="2" fill="none" /></g>,
  diamondFlag: <g><path d="M12 15l8-10 9 10-9 10z" fill="#90b8e8" stroke="#5878a8" /><path d="M4 8v20" stroke="#30a040" strokeWidth="1.500" /><path d="M4 8l5 6-5 2z" fill="#30a040" /><path d="M4 18l6 4-6 4z" fill="#d03030" /><path d="M13 15l4-5 2 5-2 5z" fill="#d03080" /></g>,
  folder: <g><path d="M3 9h9l2 3h11l-2 14H4z" fill="#f4e08a" stroke="#a89040" /><path d="M3 15h22l-3 11H3z" fill="#fbeaa8" stroke="#a89040" /><path d="M14 8h7V4l6 6-6 6v-4h-7z" fill="#30b040" /></g>,
  orangeCube: <g><Cube x={3} y={2} w={24} h={14} t="#ffb030" l="#fc9a10" r="#f08000" s="#e02000" /></g>,
  flag: <g><rect x="1" y="1" width="28" height="28" fill="#ccc" /><path d="M7 26L10 6l16 3-3 11-13-2" fill="#fff" stroke="#777" /><path d="M11 8h4v4h-4zM19 9h4v4h-4zM15 12h4v4h-4zM11 15h4v3h-4z" fill="#666" /></g>,
  frameWin: <g><path d="M3 7V3h5M22 3h5v4M27 23v4h-5M8 27H3v-4" fill="none" stroke="#888" strokeWidth="1.400" /><rect x="7" y="7" width="16" height="16" fill="#fff" stroke="#222" strokeWidth="1.200" /><rect x="9" y="11" width="12" height="10" fill="url(#winG)" /></g>,
  searchMag: <g fill="none" stroke="#444"><circle cx="18" cy="11" r="7.500" fill="#fff" strokeWidth="1.400" /><path d="M12 17L4 26" strokeWidth="2.800" /></g>,
  chevUp: <path d="M4 20L15 9l11 11-3 2-8-8-8 8z" fill="#fff" stroke="#222" strokeWidth="1.200" />,
  help: <g><circle cx="15" cy="15" r="13" fill="url(#helpG)" /><text x="15" y="22" fill="#fff" fontSize="20" fontWeight="700" fontFamily="Liberation Sans" textAnchor="middle">?</text></g>,
  min: <path d="M4 24h22" stroke="#222" strokeWidth="3.500" />,
  restore: <g fill="none" stroke="#222" strokeWidth="2.400"><rect x="4" y="12" width="17" height="14" /><path d="M9 12V5h17v13h-5" /></g>,
  close: <path d="M5 5l20 20M25 5L5 25" stroke="#222" strokeWidth="3.200" />,
  winMax: <rect x="3" y="4" width="23" height="22" fill="none" stroke="#333" strokeWidth="2.200" />,
  winClose: <path d="M4 4l22 22M26 4L4 26" stroke="#333" strokeWidth="2.200" />,
  winMin: <path d="M4 25h22" stroke="#333" strokeWidth="3" />,
  gear: <g><circle cx="15" cy="15" r="7.500" fill="none" stroke="#333" strokeWidth="4" /><path d="M15 2v6M15 22v6M2 15h6M22 15h6M6 6l4 4M20 20l4 4M24 6l-4 4M10 20l-4 4" stroke="#333" strokeWidth="3.500" /></g>,
  gearW: <g><circle cx="15" cy="15" r="7.500" fill="none" stroke="#fff" strokeWidth="4.500" /><path d="M15 2v6M15 22v6M2 15h6M22 15h6M6 6l4 4M20 20l4 4M24 6l-4 4M10 20l-4 4" stroke="#fff" strokeWidth="3.500" /></g>,
  reset: <g fill="none"><path d="M21 7A10 10 0 1 1 8 9" stroke="#fff" strokeWidth="3" /><path d="M3 4h10v9z" fill="#fff" /></g>,
  closeW: <path d="M5 5l20 20M25 5L5 25" stroke="#fff" strokeWidth="3.500" />,
  chev: <path d="M4 21L15 9l11 12" fill="none" stroke="#3a8fc0" strokeWidth="4" />,
  sUp: <path d="M6 19l9-9 9 9" fill="none" stroke="#444" strokeWidth="4.500" />,
  sDown: <path d="M6 11l9 9 9-9" fill="none" stroke="#444" strokeWidth="4.500" />,
  greenCheck: <path d="M4 16l7 8L26 7l-3-2-12 12-4-4z" fill="#22b14c" />,
};

const IconSvg = styled.svg`display: block; flex-shrink: 0;`;
const Icon = ({ n, s = 30 }) => <IconSvg width={s} height={s} viewBox="0 0 30 30">{G[n]}</IconSvg>;

const groups = [
  { label: '部件验证', cols: 2, icons: ['partCheck', 'trapPurple', 'stairRain', 'machine'] },
  { label: '主要', cols: 8, icons: ['layout', 'wcs', 'wireYel', 'moldDot', 'notch', 'moldFrame', 'boltPlate', 'boltBooks', 'ejector', 'slider', 'hatchYel', 'moldRed', 'yelH', 'redUp', 'table', 'eye'] },
  { label: '分型刀具', cols: 4, icons: ['trapPurple', 'diamond', 'wave', 'redGrid', 'orange', 'grayPurple', 'squareBall', 'docs'] },
  { label: '冷却工具', cols: 4, icons: ['pipeRed', 'pipeAxes', 'pipeTag', 'pipeBlue', 'vPipe', 'handC', 'brass', 'channel'] },
  { label: '注塑模工具', cols: 9, icons: ['redCube', 'blueBox', 'blocks', 'layered', 'tile', 'sheet', 'curved', 'boxLine', 'hammerTag', 'palette', 'knot', 'wireCube', 'redBox', 'hatchTeal', 'tray', 'cylBox', 'cubeCurve', 'calc'] },
  { label: '工具验证', cols: 2, icons: ['boxesCheck', 'goldFrame', 'armUp', 'armTilt'] },
  { label: '模具图纸', cols: 2, icons: ['drawSheet', 'yelGrid', 'purpleTable', 'cross'] },
];
const tabs = ['主页', '曲线', '分析', '视图', '渲染', '工具', '应用模块'];
const quick = [['save', 32], ['|'], ['undo', 26], ['v', 10], ['redo', 26], ['|'], ['cut', 28], ['copy', 19], ['paste', 27], ['|'], ['treeDoc', 26], ['v', 13], ['|'], ['eraser', 28], ['|']];
const toolCentres = [
  ['gAsm', 401], ['gFilter', 426], ['filterBox', 449], ['v', 466], ['target', 486], ['gTree', 510], ['marquee', 534], ['v', 552], ['shaded', 572], ['blueCube', 596], ['gSnap', 623], ['gLine', 647], ['gLineMid', 672], ['gCurve', 696], ['gPoly', 723], ['gTan', 746], ['gCircDot', 773], ['gCirc4', 797], ['gPlus', 824], ['gLineMid', 847], ['gCyl', 872], ['gGrid', 896],
  ['|', 915], ['zoomBox', 936], ['panHand', 960], ['rotate', 985], ['fit', 1012], ['v', 1029], ['render', 1046], ['v', 1065], ['sphere', 1085], ['v', 1103], ['diamondFlag', 1121], ['v', 1139], ['|', 1152],
];
const tools = toolCentres.map(([n, c], i) => {
  const left = i === 0 ? c - 12 : (toolCentres[i - 1][1] + c) / 2;
  const right = i === toolCentres.length - 1 ? c + 2 : (toolCentres[i + 1][1] + c) / 2;
  return [n, right - left];
});
const rail = [
  { n: 'gear', h: 24, s: 16 }, { n: 'asm', h: 38, mt: 19, s: 26 }, { n: 'mirror', h: 40, mt: 3, s: 24 }, { n: 'moldTree', h: 46, active: true, s: 24 },
  { n: 'books', h: 38, s: 26 }, { n: 'info', h: 38, mt: 17, s: 26 }, { n: 'webDoc', h: 38, mt: 15, s: 24 }, { n: 'clock', h: 38, mt: 16, s: 26 }, { n: 'rainbowWand', h: 34, mt: 4, s: 26 },
];

const RailWave = styled.svg`display: block; margin-top: -2px;`;
const TriCol = () => <ScrollCol>
  <Tri $up $c="#bbb" />
  <Tri />
  <Over><Tri /></Over>
</ScrollCol>;

const holes = [];
for (let i = 0; i < 13; i++) for (let j = 0; j < 8; j++) holes.push([412 + i * 32 - j * 31.7, 75 + i * 10.25 + j * 19.6 + Math.sin(i / 12 * Math.PI) * -4]);

function Model() {
  return <Stage viewBox="0 0 922 479">
    <g transform="translate(215 92) scale(.3333)">
      <path d="M380 22C450 45 520 70 650 78C760 88 840 90 900 125C940 150 975 165 990 178C1010 195 1012 210 1012 240C1010 350 1000 480 980 610C975 640 965 655 950 670C850 770 700 860 520 950C500 958 480 958 465 945C380 880 300 840 250 790C180 720 130 670 60 620C45 610 42 595 42 570C36 480 36 380 45 265C48 240 60 220 80 205C180 135 280 75 350 30C362 22 372 20 380 22Z" fill="url(#sideG)" stroke="#2727c4" strokeWidth="3" />
      <path d="M60 620C130 670 180 720 250 790C300 840 380 880 465 945" fill="none" stroke="#2c2cdc" strokeWidth="5" />
      <path d="M46 570C40 480 40 380 49 280" fill="none" stroke="#2a2ad4" strokeWidth="14" filter="url(#blur)" />
      <path d="M380 22C450 45 520 70 650 78C760 88 840 90 900 125C940 150 975 165 990 178C880 290 700 390 550 440C535 445 525 455 515 465C400 400 250 330 60 262C48 245 60 220 80 205C180 135 280 75 350 30C362 22 372 20 380 22Z" fill="url(#topG)" />
      <path d="M70 235C80 225 90 232 100 240" stroke="#6c6cff" strokeWidth="5" fill="none" filter="url(#blur)" />
      <path d="M530 470C528 650 512 800 490 950C500 955 510 954 520 950C700 860 850 770 950 670C955 665 958 660 960 655C830 580 700 510 570 452C555 455 540 460 530 470Z" fill="#4343ff" />
      <path d="M570 452C720 400 880 300 990 190C1005 205 1005 225 1003 250C1000 380 990 520 970 620C968 640 965 650 960 655C830 580 700 510 570 452Z" fill="url(#innerG)" />
      <path d="M575 460C700 510 830 580 955 650" fill="none" stroke="#6d6dff" strokeWidth="6" filter="url(#blur)" />
      <path d="M420 410C460 430 490 445 520 462" fill="none" stroke="#7272ff" strokeWidth="9" filter="url(#blur)" />
      <path d="M515 462C535 440 555 435 600 418C740 365 880 280 985 178" fill="none" stroke="#14147c" strokeWidth="2.500" />
      <path d="M532 468C550 448 570 446 610 430C750 375 890 290 992 188" fill="none" stroke="#5858ff" strokeWidth="3" />
      <path d="M512 472C510 620 495 800 470 938" fill="none" stroke="#12127a" strokeWidth="2.500" />
      <path d="M525 478C522 640 505 800 484 945" fill="none" stroke="#3232d8" strokeWidth="6" />
      {holes.map(([x, y], i) => <circle key={i} cx={x} cy={y} r="4.500" fill="#1a1a66" />)}
      <path d="M768 574C730 592 690 615 662 640C705 625 745 600 768 574Z" fill="#e83434" />
      <path d="M774 578C762 620 758 660 766 702C776 660 778 620 774 578Z" fill="#157315" />
      <path d="M786 576C820 605 860 630 896 642C865 615 825 590 786 576Z" fill="#2468ff" />
      <g fontFamily="Liberation Sans" fontSize="37">
        <text x="664" y="680" fill="#e84040">XC</text>
        <text x="778" y="734" fill="#1c8a3c">YC</text>
        <text x="855" y="684" fill="#2060f0">ZC</text>
      </g>
    </g>
    <g transform="translate(-385 -188)">
      <g stroke="#a58fb5" fill="none"><path d="M411 624l15 8v16l-15 8-15-8v-16zM396 632l15 8 15-8M411 640v16M396 648l15-8 15 8" /></g>
      <path d="M409 627l-16 7" stroke="#e03030" strokeWidth="2" />
      <path d="M413 624l18 11" stroke="#2050e0" strokeWidth="2" />
      <path d="M410 640v13" stroke="#80b080" strokeWidth="1.500" />
      <circle cx="411" cy="621" r="3.500" fill="#e8e8e8" stroke="#bbb" />
      <text x="384" y="642" fontSize="10" fill="#e04040" fontFamily="Liberation Sans">X</text>
      <text x="433" y="641" fontSize="10" fill="#3060f0" fontFamily="Liberation Sans">Z</text>
    </g>
  </Stage>;
}

export default function App() {
  return <>
    <Global />
    <Defs>
      <defs>
        <linearGradient id="rainbow" x1="0" y1="0" x2="0" y2="1"><stop offset="0" stopColor="#f01010" /><stop offset=".3" stopColor="#f0e010" /><stop offset=".55" stopColor="#10e040" /><stop offset=".8" stopColor="#10c0f0" /><stop offset="1" stopColor="#1020f0" /></linearGradient>
        <linearGradient id="orangeG" x1="0" y1="0" x2="1" y2="0"><stop offset="0" stopColor="#f0b030" /><stop offset="1" stopColor="#e05030" /></linearGradient>
        <linearGradient id="curveG" x1="0" y1="0" x2="1" y2="0"><stop offset="0" stopColor="#f08030" /><stop offset=".5" stopColor="#ffd050" /><stop offset="1" stopColor="#e06030" /></linearGradient>
        <linearGradient id="winG" x1="0" y1="0" x2="0" y2="1"><stop offset="0" stopColor="#2a60c0" /><stop offset="1" stopColor="#cfe0f8" /></linearGradient>
        <radialGradient id="ball" cx=".35" cy=".3"><stop offset="0" stopColor="#a0c8ff" /><stop offset="1" stopColor="#2040c0" /></radialGradient>
        <radialGradient id="helpG" cx=".4" cy=".3"><stop offset="0" stopColor="#80a8f0" /><stop offset="1" stopColor="#2050b8" /></radialGradient>
        <radialGradient id="gold" cx=".4" cy=".35"><stop offset="0" stopColor="#f4ecc0" /><stop offset="1" stopColor="#a89850" /></radialGradient>
        <linearGradient id="sideG" gradientUnits="userSpaceOnUse" x1="290" y1="360" x2="345" y2="490"><stop offset="0" stopColor="#3030e8" /><stop offset=".35" stopColor="#2626c4" /><stop offset="1" stopColor="#1c1c8e" /></linearGradient>
        <linearGradient id="topG" gradientUnits="userSpaceOnUse" x1="350" y1="60" x2="650" y2="420"><stop offset="0" stopColor="#3a3afa" /><stop offset="1" stopColor="#3030e8" /></linearGradient>
        <linearGradient id="innerG" gradientUnits="userSpaceOnUse" x1="700" y1="400" x2="1000" y2="400"><stop offset="0" stopColor="#1a1a86" /><stop offset="1" stopColor="#1e1e96" /></linearGradient>
        <filter id="blur"><feGaussianBlur stdDeviation="3" /></filter>
      </defs>
    </Defs>
    <Frame>
      <TitleBar>
        <Logo>NX</Logo>
        <TitleItem $w={5} />
        <VSep />
        {quick.map((q, i) => q[0] === '|' ? <VSep key={i} /> : q[0] === 'v'
          ? <TitleItem key={i} $w={q[1]}><Tri /></TitleItem>
          : <TitleItem key={i} $w={q[1]}><Icon n={q[0]} s={20} /></TitleItem>)}
        <TitleItem $w={28}><Icon n="window" s={22} /></TitleItem>
        <WinLabel>窗口</WinLabel>
        <TitleItem $w={12}><Tri /></TitleItem>
        <TitleItem $w={10}><Over><Tri /></Over></TitleItem>
        <AppTitle>NX 10 - 建模 - [display.prt]</AppTitle>
        <Brand>SIEMENS</Brand>
        <WinBtns><Icon n="winMin" s={14} /><Icon n="winMax" s={14} /><Icon n="winClose" s={13} /></WinBtns>
      </TitleBar>
      <TabBar>
        <FileTab>文件(F)</FileTab>
        {tabs.map(t => <Tab key={t}>{t}</Tab>)}
        <Tab $active>注塑模向导</Tab>
        <TabRight>
          <Search>查找命令<Icon n="searchMag" s={20} /></Search>
          <TabBtn $w={22}><Icon n="frameWin" s={18} /></TabBtn>
          <TabBtn $w={28}><Icon n="chevUp" s={17} /></TabBtn>
          <TabBtn $w={24}><Icon n="help" s={17} /></TabBtn>
          <TabBtn $w={20}><Icon n="min" s={11} /></TabBtn>
          <TabBtn $w={22}><Icon n="restore" s={15} /></TabBtn>
          <TabBtn $w={22}><Icon n="close" s={15} /></TabBtn>
        </TabRight>
      </TabBar>
      <Ribbon>
        <InitGroup>
          <InitIcon><Icon n="initDoc" s={30} /></InitIcon>
          <InitLabel>初始化项目</InitLabel>
        </InitGroup>
        {groups.map(g => <Group key={g.label}>
          <GroupBody>
            <IconGrid $cols={g.cols}>{g.icons.map((n, k) => <Icon key={k} n={n} s={28} />)}</IconGrid>
            <TriCol />
          </GroupBody>
          <GroupFoot>
            <GroupLabel $cols={g.cols}>{g.label}</GroupLabel>
            <FootArrow><Tri /></FootArrow>
          </GroupFoot>
        </Group>)}
        <RibbonEnd><Tri /></RibbonEnd>
      </Ribbon>
      <ToolBar>
        <MenuBtn><Icon n="menu" s={17} />菜单(M)<TitleItem $w={12}><Tri $c="#333" /></TitleItem></MenuBtn>
        <VSep $h={24} />
        <Sel $w={132} $ml={13}>没有选择过滤器<Tri $s={4} /></Sel>
        <Sel $w={140} $ml={9}>仅在工作部件内<Tri $s={4} /></Sel>
        <TitleItem $w={5} />
        {tools.map((t, i) => t[0] === '|'
          ? <ToolItem key={i} $w={t[1]}><VSep /></ToolItem>
          : t[0] === 'v'
            ? <ToolItem key={i} $w={t[1]}><Tri /></ToolItem>
            : <ToolItem key={i} $w={t[1]}><Icon n={t[0]} s={18} /></ToolItem>)}
        <ToolEnd><Tri /></ToolEnd>
      </ToolBar>
      <Main>
        <Rail>
          {rail.map(r => <RailItem key={r.n} $h={r.h} $mt={r.mt} $active={r.active}><Icon n={r.n} s={r.s} /></RailItem>)}
          <RailWave width="28" height="6" viewBox="0 0 28 6"><path d="M1 3c5-3 8 3 13 1s8-3 13 0" stroke="#444" fill="none" /></RailWave>
          <RailItem $h={16} $mt={5}><Over><Tri $up $c="#bbb" /></Over></RailItem>
          <RailItem $h={16}><Tri $up $c="#bbb" /></RailItem>
          <RailItem $h={15}><Tri /></RailItem>
          <RailItem $h={16}><Over><Tri /></Over></RailItem>
        </Rail>
        <RailGap />
        <Dialog>
          <DialogHead>
            <Icon n="gearW" s={15} />初始化项目
            <HeadRight><Icon n="reset" s={15} /><Icon n="closeW" s={14} /></HeadRight>
          </DialogHead>
          <DialogScroll>
            <Panel>
              <Section $h={72}>
                <SecHead>产品<Icon n="chev" s={13} /></SecHead>
                <Picked>
                  <PickMain><Icon n="greenCheck" s={14} />选择体 (1)</PickMain>
                  <PickBtn><Icon n="orangeCube" s={24} /></PickBtn>
                </Picked>
              </Section>
              <Section $h={214}>
                <SecHead>项目设置<Icon n="chev" s={13} /></SecHead>
                <LabelRow $h={27}>路径</LabelRow>
                <FieldRow>
                  <Field $w={272} $h={24}>C:\Users\xumingliang\Desktop\9.13</Field>
                  <IconBtn><Icon n="folder" s={18} /></IconBtn>
                </FieldRow>
                <LabelRow $h={25}>Name</LabelRow>
                <Field $w={298} $h={24}>display</Field>
                <Row $h={25} $mt={1}>材料<Sel $w={141} $h={25} $fs={12}>&nbsp;尼龙<Tri /></Sel></Row>
                <Row $h={23} $mt={2}>收缩<Field $w={84} $h={23} /></Row>
                <Row $h={24} $mt={2}>配置<Sel $w={141} $h={24} $fs={12}>&nbsp;默认<Tri /></Sel></Row>
              </Section>
              <Section $h={102}>
                <SecHead>属性<Icon n="chev" s={13} /></SecHead>
                <Table>
                  <Cell $head>名称</Cell><Cell $head>Value</Cell><Cell $head $end />
                  <Cell /><Cell /><Cell $end />
                  <Cell $alt $last /><Cell $alt $last /><Cell $alt $last $end />
                </Table>
              </Section>
            </Panel>
            <SBar>
              <SBtn><Icon n="sUp" s={11} /></SBtn>
              <SThumb />
              <SBtn $end><Icon n="sDown" s={11} /></SBtn>
            </SBar>
          </DialogScroll>
          <Collapse><Tri $up $s={6} /></Collapse>
          <Buttons><Btn $primary>确定</Btn><Btn>取消</Btn></Buttons>
        </Dialog>
        <Viewport><Model /></Viewport>
      </Main>
      <StatusBar>
        <StatusText>选择实体或片体</StatusText>
        <Icon n="flag" s={15} />
        <Icon n="frameWin" s={16} />
      </StatusBar>
      <Strip />
      <Watermark>
        <svg width="74" height="84" viewBox="0 0 74 84">
          <path d="M37 1l36 21v41L37 84 1 63V22z" fill="#9bd3f3" opacity=".85" />
          <path d="M37 1l20 12 2 17-22-12-19-1-2-5z" fill="#cfe8f6" />
          <path d="M1 22l14-8 3 4 19 0-22 13-1 22-13 10z" fill="#b3dcf5" />
          <path d="M73 22v41l-14 8 2-4V30l-4-17z" fill="#82cdf2" />
          <path d="M17 54l20 12 20-12 2 15-22 15L17 70z" fill="#80d2fb" />
          <path d="M37 10l24 14v30L37 68 13 54V24z" fill="none" stroke="#e4ecf0" strokeWidth="3" />
          <path d="M37 22l17 9-17 9-17-9z" fill="#c4e3f7" />
          <path d="M20 31l17 9v20l-17-10z" fill="#a5d6f5" />
          <path d="M54 31l-17 9v20l17-10z" fill="#79c6ef" />
        </svg>
        <MarkText>
          <MarkTitle>3D世界网</MarkTitle>
          <MarkSub>WWW.3DSJW.COM</MarkSub>
        </MarkText>
      </Watermark>
    </Frame>
  </>;
}
